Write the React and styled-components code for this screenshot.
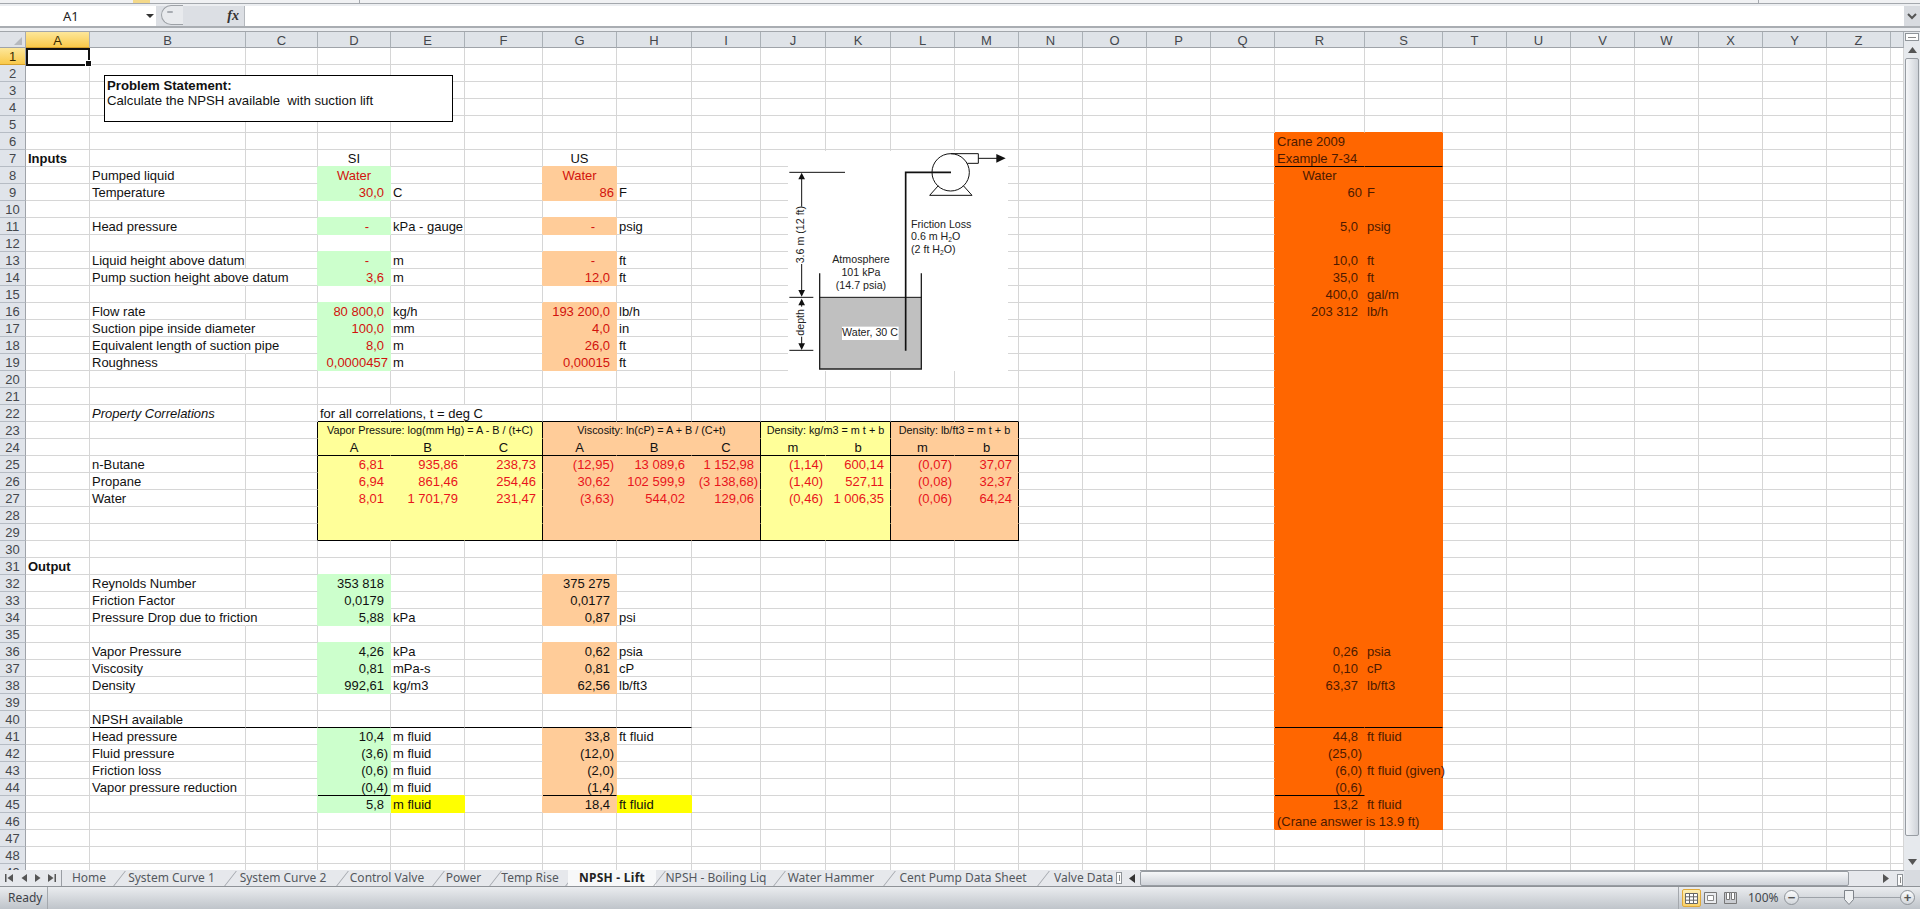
import React from 'react';
import styled, { createGlobalStyle } from 'styled-components';

const Global = createGlobalStyle`
  html, body { margin: 0; padding: 0; background: #fff; overflow: hidden; }
  #root { width: 1920px; height: 909px; }
`;

const COLS = [
  ['A', 64], ['B', 156], ['C', 72], ['D', 73], ['E', 74], ['F', 78], ['G', 74], ['H', 75], ['I', 69],
  ['J', 65], ['K', 65], ['L', 64], ['M', 64], ['N', 64], ['O', 64], ['P', 64], ['Q', 64], ['R', 90],
  ['S', 78], ['T', 64], ['U', 64], ['V', 64], ['W', 64], ['X', 64], ['Y', 64], ['Z', 64], ['AA', 13],
];
const NAMES = COLS.map((c) => c[0]);
const idx = (c) => NAMES.indexOf(c);

const GREEN = '#ccffcc';
const PEACH = '#ffcc99';
const YELLOW = '#ffff99';
const BRIGHT = '#ffff00';
const ORANGE = '#ff6600';
const GRID = '#d6d6d6';
const BLACK = '#000000';

const num = (t) => ({ t, align: 'right', pad: t.endsWith(')') ? 2 : t === '-' ? 21 : 6 });
const tight = (t) => ({ t, align: 'right', pad: 2 });
const mid = (t) => ({ t, align: 'center', pad: 0 });
const bold = (t) => ({ t, bold: true });
const ital = (t) => ({ t, italic: true });
const small = (t, span) => ({ t, align: 'center', pad: 0, small: true, span });

const DATA = {
  6: { R: 'Crane 2009' },
  7: { A: bold('Inputs'), D: mid('SI'), G: mid('US'), R: 'Example 7-34' },
  8: { B: 'Pumped liquid', D: mid('Water'), G: mid('Water'), R: mid('Water') },
  9: { B: 'Temperature', D: num('30,0'), E: 'C', G: tight('86'), H: 'F', R: tight('60'), S: 'F' },
  11: { B: 'Head pressure', D: num('-'), E: 'kPa - gauge', G: num('-'), H: 'psig', R: num('5,0'), S: 'psig' },
  13: { B: 'Liquid height above datum', D: num('-'), E: 'm', G: num('-'), H: 'ft', R: num('10,0'), S: 'ft' },
  14: { B: 'Pump suction height above datum', D: num('3,6'), E: 'm', G: num('12,0'), H: 'ft', R: num('35,0'), S: 'ft' },
  15: { R: num('400,0'), S: 'gal/m' },
  16: { B: 'Flow rate', D: num('80 800,0'), E: 'kg/h', G: num('193 200,0'), H: 'lb/h', R: num('203 312'), S: 'lb/h' },
  17: { B: 'Suction pipe inside diameter', D: num('100,0'), E: 'mm', G: num('4,0'), H: 'in' },
  18: { B: 'Equivalent length of suction pipe', D: num('8,0'), E: 'm', G: num('26,0'), H: 'ft' },
  19: { B: 'Roughness', D: tight('0,0000457'), E: 'm', G: num('0,00015'), H: 'ft' },
  22: { B: ital('Property Correlations'), D: 'for all correlations, t = deg C' },
  23: {
    D: small('Vapor Pressure: log(mm Hg) = A - B / (t+C)', 3),
    G: small('Viscosity: ln(cP) = A + B / (C+t)', 3),
    J: small('Density: kg/m3 = m t + b', 2),
    L: small('Density: lb/ft3 = m t + b', 2),
  },
  24: { D: mid('A'), E: mid('B'), F: mid('C'), G: mid('A'), H: mid('B'), I: mid('C'), J: mid('m'), K: mid('b'), L: mid('m'), M: mid('b') },
  25: { B: 'n-Butane', D: num('6,81'), E: num('935,86'), F: num('238,73'), G: num('(12,95)'), H: num('13 089,6'), I: num('1 152,98'), J: num('(1,14)'), K: num('600,14'), L: num('(0,07)'), M: num('37,07') },
  26: { B: 'Propane', D: num('6,94'), E: num('861,46'), F: num('254,46'), G: num('30,62'), H: num('102 599,9'), I: num('(3 138,68)'), J: num('(1,40)'), K: num('527,11'), L: num('(0,08)'), M: num('32,37') },
  27: { B: 'Water', D: num('8,01'), E: num('1 701,79'), F: num('231,47'), G: num('(3,63)'), H: num('544,02'), I: num('129,06'), J: num('(0,46)'), K: num('1 006,35'), L: num('(0,06)'), M: num('64,24') },
  31: { A: bold('Output') },
  32: { B: 'Reynolds Number', D: num('353 818'), G: num('375 275') },
  33: { B: 'Friction Factor', D: num('0,0179'), G: num('0,0177') },
  34: { B: 'Pressure Drop due to friction', D: num('5,88'), E: 'kPa', G: num('0,87'), H: 'psi' },
  36: { B: 'Vapor Pressure', D: num('4,26'), E: 'kPa', G: num('0,62'), H: 'psia', R: num('0,26'), S: 'psia' },
  37: { B: 'Viscosity', D: num('0,81'), E: 'mPa-s', G: num('0,81'), H: 'cP', R: num('0,10'), S: 'cP' },
  38: { B: 'Density', D: num('992,61'), E: 'kg/m3', G: num('62,56'), H: 'lb/ft3', R: num('63,37'), S: 'lb/ft3' },
  40: { B: 'NPSH available' },
  41: { B: 'Head pressure', D: num('10,4'), E: 'm fluid', G: num('33,8'), H: 'ft fluid', R: num('44,8'), S: 'ft fluid' },
  42: { B: 'Fluid pressure', D: num('(3,6)'), E: 'm fluid', G: num('(12,0)'), R: num('(25,0)') },
  43: { B: 'Friction loss', D: num('(0,6)'), E: 'm fluid', G: num('(2,0)'), R: num('(6,0)'), S: 'ft fluid (given)' },
  44: { B: 'Vapor pressure reduction', D: num('(0,4)'), E: 'm fluid', G: num('(1,4)'), R: num('(0,6)') },
  45: { D: num('5,8'), E: 'm fluid', G: num('18,4'), H: 'ft fluid', R: num('13,2'), S: 'ft fluid' },
  46: { R: '(Crane answer is 13.9 ft)' },
};

const INPUT_ROWS = [8, 9, 11, 13, 14, 16, 17, 18, 19, 32, 33, 34, 36, 37, 38, 41, 42, 43, 44, 45];
const NO_RIGHT = new Set(['B14', 'B17', 'B18', 'B34', 'D22', 'E22']);

const inTable = (c, r) => r >= 23 && r <= 29 && c >= idx('D') && c <= idx('M');

const fillOf = (c, r) => {
  if (c < 0 || c >= NAMES.length || r < 1) return null;
  const n = NAMES[c];
  if ((n === 'R' || n === 'S') && r >= 6 && r <= 46) return ORANGE;
  if (inTable(c, r)) {
    if (c <= idx('F')) return YELLOW;
    if (c <= idx('I')) return PEACH;
    if (c <= idx('K')) return YELLOW;
    return PEACH;
  }
  if ((n === 'E' || n === 'H') && r === 45) return BRIGHT;
  if (n === 'D' && INPUT_ROWS.includes(r)) return GREEN;
  if (n === 'G' && INPUT_ROWS.includes(r)) return PEACH;
  return null;
};

const blackBottom = (c, r) => {
  const n = NAMES[c];
  if (r === 40 && ((c >= idx('B') && c <= idx('H')) || n === 'R' || n === 'S')) return true;
  if (r === 7 && (n === 'R' || n === 'S')) return true;
  if (r === 44 && (n === 'D' || n === 'G' || n === 'R')) return true;
  if ((r === 22 || r === 24 || r === 29) && c >= idx('D') && c <= idx('M')) return true;
  return false;
};
const blackRight = (c, r) => {
  const n = NAMES[c];
  return r >= 23 && r <= 29 && ['C', 'F', 'I', 'K', 'M'].includes(n);
};

const textColor = (c, r, fill) => {
  const n = NAMES[c];
  if (fill === ORANGE) return '#4d1a00';
  if (inTable(c, r) && r >= 25) return '#e8141c';
  if ((n === 'D' || n === 'G') && r >= 8 && r <= 19) return '#d2120c';
  return '#111111';
};

const App = styled.div`
  width: 1920px;
  height: 909px;
  display: flex;
  flex-direction: column;
  overflow: hidden;
  background: #e4e7eb;
  font-family: "Liberation Sans", Arial, sans-serif;
`;
const RibbonEdge = styled.div`
  height: 3px;
  flex: none;
  display: flex;
  background: #f0f1f3;
  border-bottom: 1px solid #a4a8ad;
`;
const RibbonPiece = styled.div`
  flex: ${(p) => (p.$w ? `0 0 ${p.$w}px` : '1')};
  background: ${(p) => p.$bg || 'transparent'};
  border-right: ${(p) => (p.$line ? '1px solid #a4a8ad' : 'none')};
`;
const FormulaBar = styled.div`
  flex: none;
  height: 28px;
  box-sizing: border-box;
  padding-top: 2px;
  display: flex;
  flex-direction: column;
  background: #eceef1;
  border-bottom: 1px solid #a2a6ab;
`;
const FormulaRow = styled.div`
  height: 20px;
  display: flex;
  border-bottom: 2px solid #a9adb2;
`;
const NameBox = styled.div`
  width: 156px;
  flex: none;
  background: #fff;
  display: flex;
  align-items: center;
  position: relative;
`;
const NameText = styled.span`
  margin-left: 63px;
  font: 13px "Noto Sans", sans-serif;
  color: #222;
`;
const DropArrow = styled.span`
  position: absolute;
  left: 146px;
  top: 8px;
  border: 4px solid transparent;
  border-top: 4px solid #333;
`;
const FxGroup = styled.div`
  width: 89px;
  flex: none;
  background: #dcdfe4;
  display: flex;
  align-items: center;
  justify-content: flex-end;
  position: relative;
  border-right: 1px solid #b4b8bd;
  box-sizing: border-box;
`;
const Collapse = styled.span`
  position: absolute;
  left: 5px;
  top: -1px;
  width: 22px;
  height: 20px;
  box-sizing: border-box;
  border: 1px solid #9da1a6;
  border-right: none;
  border-radius: 11px 0 0 11px;
  background: #e8eaed;
  &::after {
    content: '';
    position: absolute;
    left: 5px;
    top: 5px;
    width: 6px;
    height: 2px;
    background: #a8acb2;
    border-radius: 1px;
  }
`;
const Fx = styled.span`
  font: italic bold 14px "Liberation Serif", serif;
  color: #333;
  margin-right: 5px;
`;
const FormulaInput = styled.div`
  flex: 1;
  background: #fff;
`;
const Expand = styled.div`
  flex: none;
  width: 16px;
  background: #d8dbe0;
  display: flex;
  align-items: center;
  justify-content: center;
`;
const Work = styled.div`
  flex: none;
  height: 838px;
  display: flex;
`;
const Sheet = styled.div`
  width: 1904px;
  flex: none;
  height: 838px;
  overflow: hidden;
  position: relative;
  background: #fff;
  display: grid;
  grid-template-columns: 26px ${COLS.map((c) => `${c[1]}px`).join(' ')};
  grid-template-rows: 16px repeat(49, 17px);
`;
const Corner = styled.div`
  background: #dfe2e7;
  border-right: 1px solid #a7abb1;
  border-bottom: 1px solid #9fa3a9;
  box-sizing: border-box;
  position: relative;
  &::after {
    content: '';
    position: absolute;
    right: 3px;
    bottom: 2px;
    border-style: solid;
    border-width: 0 0 8px 8px;
    border-color: transparent transparent #b6b9be transparent;
  }
`;
const ColHead = styled.div`
  box-sizing: border-box;
  font-size: 13px;
  line-height: 15px;
  padding-top: 1px;
  text-align: center;
  color: ${(p) => (p.$on ? '#3a2a00' : '#44474c')};
  border-right: 1px solid #aab0b6;
  border-bottom: 1px solid ${(p) => (p.$on ? '#d5a02c' : '#9fa3a9')};
  background: ${(p) => (p.$on ? 'linear-gradient(#fde79a, #f9c94a)' : '#dfe3e8')};
`;
const RowHead = styled.div`
  box-sizing: border-box;
  font-size: 13px;
  line-height: 16px;
  padding-top: 1px;
  text-align: center;
  color: ${(p) => (p.$on ? '#3a2a00' : '#44474c')};
  border-right: 1px solid #9fa3a9;
  border-bottom: 1px solid ${(p) => (p.$on ? '#d5a02c' : '#b6bcc4')};
  background: ${(p) => (p.$on ? 'linear-gradient(#fde79a, #f9c94a)' : '#e0e4ea')};
`;
const Cell = styled.div`
  box-sizing: border-box;
  min-width: 0;
  position: relative;
  z-index: ${(p) => (p.$text ? 1 : 0)};
  grid-column: span ${(p) => p.$span || 1};
  background: ${(p) => p.$bg || 'transparent'};
  border-right: 1px solid ${(p) => p.$br};
  border-bottom: 1px solid ${(p) => p.$bb};
  padding: 1px ${(p) => p.$pad}px 0 ${(p) => (p.$align === 'left' ? 2 : 0)}px;
  white-space: nowrap;
  text-align: ${(p) => p.$align};
  color: ${(p) => p.$color};
  font-size: ${(p) => (p.$small ? '10.85px' : '13px')};
  line-height: ${(p) => (p.$small ? '15px' : '16px')};
  font-weight: ${(p) => (p.$bold ? 700 : 400)};
  font-style: ${(p) => (p.$italic ? 'italic' : 'normal')};
`;
const Selection = styled.div`
  position: absolute;
  left: 26px;
  top: 16px;
  width: 64px;
  height: 18px;
  box-sizing: border-box;
  border: 2px solid #111;
  z-index: 4;
  &::after {
    content: '';
    position: absolute;
    right: -4px;
    bottom: -3px;
    width: 5px;
    height: 5px;
    background: #111;
    border: 1px solid #fff;
  }
`;
const NoteBox = styled.div`
  position: absolute;
  left: 104px;
  top: 43px;
  width: 349px;
  height: 47px;
  box-sizing: border-box;
  border: 1px solid #000;
  background: #fff;
  z-index: 3;
  padding: 2px;
  font-size: 13.2px;
  line-height: 15px;
  color: #111;
  white-space: pre;
`;
const NoteTitle = styled.div`
  font-weight: 700;
`;
const Diagram = styled.svg`
  position: absolute;
  left: 788px;
  top: 119px;
  width: 220px;
  height: 220px;
  z-index: 3;
  background: #fff;
  text {
    font-family: "Liberation Sans", Arial, sans-serif;
    font-size: 32px;
    fill: #222;
  }
`;
const VScroll = styled.div`
  width: 16px;
  flex: none;
  display: flex;
  flex-direction: column;
  background: #e6e9ed;
`;
const SplitV = styled.div`
  height: 6px;
  margin: 1px 1px 0;
  border: 1px solid #8f9499;
  background: #fdfdfd;
  display: flex;
  align-items: center;
  justify-content: center;
  &::after {
    content: '';
    width: 8px;
    height: 1px;
    background: #888;
  }
`;
const ArrowBtn = styled.div`
  height: ${(p) => p.$h}px;
  flex: none;
  display: flex;
  align-items: center;
  justify-content: center;
`;
const TabArrow = styled(ArrowBtn)`
  width: 17px;
`;
const ThumbV = styled.div`
  height: 778px;
  flex: none;
  margin: 0 1px;
  box-sizing: border-box;
  border: 1px solid #979ca2;
  border-radius: 2px;
  background: linear-gradient(90deg, #f6f7f9, #cfd3d9);
`;
const Spacer = styled.div`
  flex: 1;
`;
const TabBar = styled.div`
  flex: none;
  height: 16px;
  display: flex;
  background: #e6e8ec;
  border-bottom: 1px solid #8f9398;
  box-sizing: content-box;
`;
const TabNav = styled.div`
  flex: none;
  width: 62px;
  display: flex;
  align-items: center;
  position: relative;
  border-right: 1px solid #9a9ea4;
  box-sizing: border-box;
`;
const NavIcon = styled.svg`
  position: absolute;
  top: 4px;
  left: ${(p) => p.$x}px;
  width: 8px;
  height: 8px;
`;
const Tab = styled.div`
  flex: none;
  box-sizing: border-box;
  width: ${(p) => p.$w}px;
  text-align: ${(p) => (p.$last ? 'left' : 'center')};
  padding-left: ${(p) => (p.$last ? 14 : 0)}px;
  white-space: nowrap;
  font: ${(p) => (p.$on ? 700 : 400)} 12px/16px "Noto Sans", sans-serif;
  letter-spacing: ${(p) => (p.$on ? '0.25px' : '0')};
  color: ${(p) => (p.$on ? '#222' : '#54585e')};
  background: ${(p) => (p.$on ? '#f7f8f9' : 'transparent')};
  position: relative;
  &::after {
    content: '';
    position: absolute;
    right: -4px;
    top: 1px;
    height: 15px;
    border-left: 1px solid #a2a6ac;
    transform: skewX(-38deg);
    display: ${(p) => (p.$last ? 'none' : 'block')};
  }
`;
const SplitH = styled.div`
  width: 6px;
  flex: none;
  height: 12px;
  margin: 2px ${(p) => p.$r ?? 1}px 0 ${(p) => p.$l ?? 1}px;
  box-sizing: border-box;
  border: 1px solid #8f9499;
  background: #fdfdfd;
  display: flex;
  align-items: center;
  justify-content: center;
  &::after {
    content: '';
    width: 1px;
    height: 6px;
    background: #888;
  }
`;
const ThumbH = styled.div`
  flex: none;
  width: 709px;
  height: 15px;
  box-sizing: border-box;
  border: 1px solid #979ca2;
  border-radius: 2px;
  background: linear-gradient(#f6f7f9, #cfd3d9);
`;
const HScroll = styled.div`
  flex: 1;
  display: flex;
  align-items: flex-start;
  border-top: 1px solid #9a9ea4;
`;
const HTail = styled.div`
  flex: 1;
  display: flex;
  align-items: center;
  justify-content: flex-end;
  height: 15px;
`;
const Status = styled.div`
  flex: none;
  height: 22px;
  display: flex;
  align-items: center;
  position: relative;
  background: linear-gradient(#eaecef, #bfc4ca);
  border-bottom: 1px solid #1a1a1a;
`;
const Ready = styled.div`
  flex: none;
  width: 48px;
  height: 100%;
  box-sizing: border-box;
  padding-left: 8px;
  font: 12px/21px "Noto Sans", sans-serif;
  color: #3e4248;
  border-right: 1px solid #a4a8ad;
`;
const StatusFill = styled.div`
  flex: 1;
`;
const ViewZone = styled.div`
  flex: none;
  width: 241px;
  height: 100%;
  position: relative;
  border-left: 1px solid #a4a8ad;
`;
const ViewIcon = styled.div`
  position: absolute;
  left: ${(p) => p.$x}px;
  top: 2px;
  width: 19px;
  height: 18px;
  box-sizing: border-box;
  display: flex;
  align-items: center;
  justify-content: center;
  border: 1px solid ${(p) => (p.$on ? '#e0a93a' : 'transparent')};
  border-radius: 2px;
  background: ${(p) => (p.$on ? 'linear-gradient(#fdeeb2, #fbd268)' : 'transparent')};
`;
const Pct = styled.div`
  position: absolute;
  left: 69px;
  top: 0;
  font: 12px/21px "Noto Sans", sans-serif;
  color: #44484e;
`;
const Round = styled.div`
  position: absolute;
  left: ${(p) => p.$x}px;
  top: 3px;
  width: 15px;
  height: 15px;
  box-sizing: border-box;
  border-radius: 50%;
  border: 1px solid #8d9298;
  background: linear-gradient(#fbfcfd, #d2d6db);
  display: flex;
  align-items: center;
  justify-content: center;
  font: 700 13px/13px "Liberation Sans", sans-serif;
  color: #555;
`;
const Track = styled.div`
  position: absolute;
  left: 120px;
  top: 10px;
  width: 102px;
  height: 1px;
  background: #9da2a8;
`;
const Knob = styled.svg`
  position: absolute;
  left: 165px;
  top: 3px;
  width: 10px;
  height: 15px;
`;

const TABS = [
  ['Home', 54], ['System Curve 1', 111], ['System Curve 2', 112], ['Control Valve', 96], ['Power', 57],
  ['Temp Rise', 76], ['NPSH - Lift', 88], ['NPSH - Boiling Liq', 120], ['Water Hammer', 110],
  ['Cent Pump Data Sheet', 154], ['Valve Data', 75],
];

const Tri = ({ d }) => (
  <svg width="9" height="6" viewBox="0 0 9 6">
    <path d={d} fill="#555" />
  </svg>
);

const Grid = () => {
  const out = [<Corner key="corner" />];
  COLS.forEach(([n]) => out.push(<ColHead key={n} $on={n === 'A'}>{n === 'AA' ? '' : n}</ColHead>));
  for (let r = 1; r <= 49; r += 1) {
    out.push(<RowHead key={`r${r}`} $on={r === 1}>{r}</RowHead>);
    const row = DATA[r] || {};
    let c = 0;
    while (c < NAMES.length) {
      const n = NAMES[c];
      const raw = row[n];
      const v = typeof raw === 'string' ? { t: raw } : raw || {};
      const span = v.span || 1;
      const last = c + span - 1;
      const fill = fillOf(c, r);
      const fillRight = fillOf(last + 1, r);
      const fillBelow = fillOf(c, r + 1);
      let br = fill || fillRight || GRID;
      if (NO_RIGHT.has(`${n}${r}`)) br = 'transparent';
      if (blackRight(last, r)) br = BLACK;
      let bb = fill || fillBelow || GRID;
      if (blackBottom(c, r)) bb = BLACK;
      const align = v.align || 'left';
      out.push(
        <Cell
          key={`${n}${r}`}
          $span={span}
          $bg={fill}
          $br={br}
          $bb={bb}
          $text={!!v.t}
          $align={align}
          $pad={v.pad || 0}
          $color={textColor(c, r, fill)}
          $bold={v.bold}
          $italic={v.italic}
          $small={v.small}
        >
          {v.t}
        </Cell>,
      );
      c += span;
    }
  }
  return out;
};

const PumpDiagram = () => (
  <Diagram viewBox="84 63 660 660">
    <g stroke="#111" fill="none" strokeWidth="3">
      <path d="M88 127H255M88 502H160M88 661H160M125 135V495M125 510V652" />
    </g>
    <path d="M125 128l-10 20h20zM125 500l-10 -20h20zM125 506l-10 20h20zM125 660l-10 -20h20z" fill="#111" />
    <rect x="106" y="230" width="32" height="172" fill="#fff" />
    <rect x="106" y="530" width="32" height="90" fill="#fff" />
    <text transform="translate(133 400) rotate(-90)">3.6 m (12 ft)</text>
    <text transform="translate(133 617) rotate(-90)">depth</text>

    <rect x="179" y="502" width="305" height="215" fill="#c0c0c0" />
    <path d="M179 430V717H484V430" fill="none" stroke="#222" strokeWidth="4" />
    <path d="M179 502H484" stroke="#111" strokeWidth="3" />
    <rect x="246" y="590" width="170" height="40" fill="#fff" />
    <text x="330" y="618" textAnchor="middle">Water, 30 C</text>

    <text x="303" y="400" textAnchor="middle">Atmosphere</text>
    <text x="303" y="438" textAnchor="middle">101 kPa</text>
    <text x="303" y="478" textAnchor="middle">(14.7 psia)</text>

    <text x="453" y="293">Friction Loss</text>
    <text x="453" y="331">0.6 m H<tspan fontSize="20" dy="6">2</tspan><tspan dy="-6">O</tspan></text>
    <text x="453" y="370">(2 ft H<tspan fontSize="20" dy="6">2</tspan><tspan dy="-6">O)</tspan></text>

    <circle cx="572" cy="127" r="56" fill="#fff" stroke="#111" strokeWidth="3" />
    <path d="M572 71H655V100H622" fill="none" stroke="#111" strokeWidth="3" />
    <path d="M535 167L509 196H636L610 167" fill="none" stroke="#111" strokeWidth="3" />
    <path d="M437 662V127H573" fill="none" stroke="#111" strokeWidth="5" />
    <path d="M655 85H712" stroke="#111" strokeWidth="3" />
    <path d="M737 85l-28 -13v26z" fill="#111" />
  </Diagram>
);

export default function AppRoot() {
  return (
    <App>
      <Global />
      <RibbonEdge>
        <RibbonPiece $w={133} />
        <RibbonPiece $w={17} $bg="#f4d98a" />
        <RibbonPiece $w={209} $line />
        <RibbonPiece $w={1398} $line />
        <RibbonPiece />
      </RibbonEdge>
      <FormulaBar>
        <FormulaRow>
          <NameBox>
            <NameText>A1</NameText>
            <DropArrow />
          </NameBox>
          <FxGroup>
            <Collapse />
            <Fx>fx</Fx>
          </FxGroup>
          <FormulaInput />
          <Expand>
            <svg width="10" height="7" viewBox="0 0 10 7">
              <path d="M1 1l4 4 4-4" fill="none" stroke="#555" strokeWidth="2" />
            </svg>
          </Expand>
        </FormulaRow>
      </FormulaBar>
      <Work>
        <Sheet>
          <Grid />
          <Selection />
          <NoteBox>
            <NoteTitle>Problem Statement:</NoteTitle>
            Calculate the NPSH available  with suction lift
          </NoteBox>
          <PumpDiagram />
        </Sheet>
        <VScroll>
          <SplitV />
          <ArrowBtn $h={17}><Tri d="M4.5 0L9 6H0z" /></ArrowBtn>
          <ThumbV />
          <Spacer />
          <ArrowBtn $h={17}><Tri d="M0 0H9L4.5 6z" /></ArrowBtn>
        </VScroll>
      </Work>
      <TabBar>
        <TabNav>
          <NavIcon $x={5} viewBox="0 0 8 8"><path d="M0 0h1.5v8H0zM8 0v8L2.5 4z" fill="#555" /></NavIcon>
          <NavIcon $x={20} viewBox="0 0 8 8"><path d="M7 0v8L1.5 4z" fill="#555" /></NavIcon>
          <NavIcon $x={34} viewBox="0 0 8 8"><path d="M1 0v8L6.5 4z" fill="#555" /></NavIcon>
          <NavIcon $x={48} viewBox="0 0 8 8"><path d="M0 0v8L5.5 4zM6.5 0H8v8H6.5z" fill="#555" /></NavIcon>
        </TabNav>
        {TABS.map(([t, w], i) => (
          <Tab key={t} $w={w} $on={t === 'NPSH - Lift'} $last={i === TABS.length - 1}>{t}</Tab>
        ))}
        <SplitH />
        <TabArrow $h={16}>
          <svg width="6" height="9" viewBox="0 0 6 9"><path d="M6 0v9L0 4.5z" fill="#333" /></svg>
        </TabArrow>
        <HScroll>
          <ThumbH />
          <HTail>
            <svg width="6" height="9" viewBox="0 0 6 9"><path d="M0 0v9l6-4.5z" fill="#555" /></svg>
            <SplitH $l={8} $r={1} />
          </HTail>
        </HScroll>
        <Expand />
      </TabBar>
      <Status>
        <Ready>Ready</Ready>
        <StatusFill />
        <ViewZone>
          <ViewIcon $x={3} $on>
            <svg width="13" height="11" viewBox="0 0 13 11">
              <path d="M.5.5h12v10H.5zM.5 3.8h12M.5 7.2h12M4.5.5v10M8.5.5v10" fill="#fff" stroke="#666" strokeWidth="1" />
            </svg>
          </ViewIcon>
          <ViewIcon $x={22}>
            <svg width="13" height="12" viewBox="0 0 13 12">
              <path d="M.5.5h12v11H.5z" fill="#e9ebee" stroke="#777" />
              <path d="M3.5 3.5h6v5h-6z" fill="#fff" stroke="#888" />
            </svg>
          </ViewIcon>
          <ViewIcon $x={42}>
            <svg width="13" height="12" viewBox="0 0 13 12">
              <path d="M.5.5h12v11H.5z" fill="#c9ccd1" stroke="#777" />
              <path d="M2.5 .5h3v7h-3zM7.5 .5h3v7h-3z" fill="#fff" stroke="#777" />
            </svg>
          </ViewIcon>
          <Pct>100%</Pct>
          <Track />
          <Round $x={105}>−</Round>
          <Knob viewBox="0 0 10 15">
            <path d="M.5.5h9v9L5 14.5.5 9.5z" fill="#eef0f2" stroke="#7f848a" />
          </Knob>
          <Round $x={221}>+</Round>
        </ViewZone>
      </Status>
    </App>
  );
}
